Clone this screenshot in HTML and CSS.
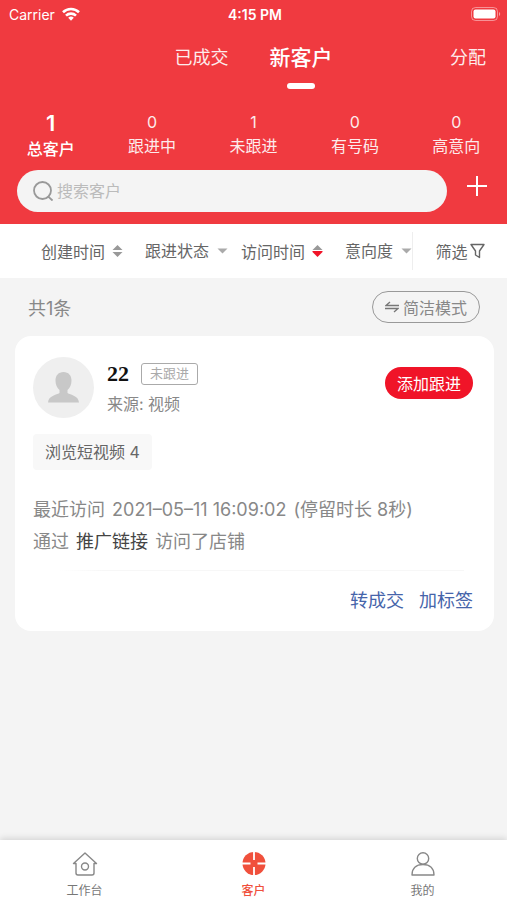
FILE: index.html
```html
<!DOCTYPE html>
<html lang="zh-CN">
<head>
    <meta charset="UTF-8">
    <meta name="viewport" content="width=device-width, initial-scale=1.0">
    <title>客户</title>
    <link rel="stylesheet" href="styles.css">
</head>
<body>
    <header class="header">
        <div class="status-bar">
            <div class="carrier">
                <span>Carrier</span>
                <svg width="18" height="14" viewBox="0 0 18 14" fill="none" stroke="#fff" stroke-width="2.6">
                    <path d="M1 5.2a11.5 11.5 0 0 1 16 0"/>
                    <path d="M4 8.6a7.2 7.2 0 0 1 10 0"/>
                    <path d="M9 13.8 6.2 10.8a4 4 0 0 1 5.6 0z" fill="#fff" stroke="none"/>
                </svg>
            </div>
            <span class="clock">4:15 PM</span>
            <svg class="battery" width="30" height="14" viewBox="0 0 30 14">
                <rect x="0.5" y="0.5" width="26" height="13" rx="4" fill="none" stroke="#fff" stroke-opacity="0.45"/>
                <rect x="2.5" y="2.5" width="22" height="9" rx="2" fill="#fff"/>
                <path d="M28 5c1.6.6 1.6 3.4 0 4z" fill="#fff" fill-opacity="0.5"/>
            </svg>
        </div>

        <nav class="top-nav">
            <div class="top-tabs">
                <a href="#" class="top-tab">已成交</a>
                <a href="#" class="top-tab active">新客户</a>
            </div>
            <a href="#" class="assign">分配</a>
        </nav>

        <div class="stats">
            <button class="stat active"><span class="stat-num">1</span><span>总客户</span></button>
            <button class="stat"><span class="stat-num">0</span><span>跟进中</span></button>
            <button class="stat"><span class="stat-num">1</span><span>未跟进</span></button>
            <button class="stat"><span class="stat-num">0</span><span>有号码</span></button>
            <button class="stat"><span class="stat-num">0</span><span>高意向</span></button>
        </div>

        <div class="search-row">
            <label class="search-box">
                <svg width="20" height="20" viewBox="0 0 20 20" fill="none" stroke="#999" stroke-width="1.8" stroke-linecap="round">
                    <circle cx="9.5" cy="9.5" r="8.5"/>
                    <path d="M15.500 15.800 19 19"/>
                </svg>
                <input type="text" class="search-input" placeholder="搜索客户" aria-label="搜索客户">
            </label>
            <button class="add-btn" aria-label="添加客户">
                <svg width="20" height="20" viewBox="0 0 20 20" stroke="#fff" stroke-width="2">
                    <path d="M10 0v20M0 10h20"/>
                </svg>
            </button>
        </div>
    </header>

    <div class="filters">
        <button class="filter">
            创建时间
            <svg width="11" height="12" viewBox="0 0 11 12" fill="#999"><path d="M5.5 0 10.5 5H.5zM5.5 12 .5 7h10z"/></svg>
        </button>
        <label class="filter filter-menu">
            <select aria-label="跟进状态"><option>跟进状态</option></select>
            <svg width="11" height="12" viewBox="0 0 11 12" fill="#aaa"><path d="M.5 3.5h10l-5 5z"/></svg>
        </label>
        <button class="filter">
            访问时间
            <svg width="11" height="12" viewBox="0 0 11 12"><path d="M5.5 0 10.5 5H.5z" fill="#999"/><path d="M5.5 12 .5 7V6h10v1z" fill="#f01428"/></svg>
        </button>
        <label class="filter filter-menu">
            <select aria-label="意向度"><option>意向度</option></select>
            <svg width="11" height="12" viewBox="0 0 11 12" fill="#aaa"><path d="M.5 3.5h10l-5 5z"/></svg>
        </label>
        <button class="filter filter-more">
            筛选
            <svg width="15" height="16" viewBox="0 0 15 16" fill="none" stroke="#666" stroke-width="1.4" stroke-linejoin="round">
                <path d="M1 1.5h13L9.5 8v6.500L5.500 12V8z"/>
            </svg>
        </button>
    </div>

    <main class="content">
        <div class="list-head">
            <span class="total">共1条</span>
            <button class="mode-btn">
                <svg width="14" height="12" viewBox="0 0 14 12" fill="none" stroke="#777" stroke-width="1.3">
                    <path d="M14 4.500H1L5 1M0 7.500h13L9 11"/>
                </svg>
                简洁模式
            </button>
        </div>

        <article class="card">
            <div class="customer">
                <svg class="avatar" width="61" height="61" viewBox="0 0 61 61">
                    <circle cx="30.5" cy="30.5" r="30.5" fill="#efefef"/>
                    <path d="M30.5 15c-5 0-8 3.500-8 8.500 0 4 1.500 7.500 4 9.500v3c-3 2-11 2.500-11.500 9.500h31c-.5-7-8.500-7.500-11.500-9.500v-3c2.500-2 4-5.500 4-9.500 0-5-3-8.500-8-8.500z" fill="#c8c8c8"/>
                </svg>
                <div class="info">
                    <div class="name-row">
                        <span class="name">22</span>
                        <span class="badge">未跟进</span>
                    </div>
                    <div class="source">来源: 视频</div>
                </div>
                <button class="follow-btn">添加跟进</button>
            </div>
            <span class="tag">浏览短视频 4</span>
            <div class="visit">
                <p>最近访问 <span class="time">2021–05–11 16:09:02</span> (停留时长 8秒)</p>
                <p>通过 <span class="channel">推广链接</span> 访问了店铺</p>
            </div>
            <div class="actions">
                <a href="#">转成交</a>
                <a href="#">加标签</a>
            </div>
        </article>
    </main>

    <nav class="tab-bar">
        <a href="#" class="tab">
            <svg width="26" height="26" viewBox="0 0 26 26" fill="none" stroke="#888" stroke-width="1.4" stroke-linejoin="round" stroke-linecap="round">
                <path d="M4 12.500H1.500L13 2l11.500 10.500H22V22a2 2 0 0 1-2 2H6a2 2 0 0 1-2-2z"/>
                <circle cx="13" cy="15.500" r="3.500"/>
            </svg>
            工作台
        </a>
        <a href="#" class="tab active">
            <svg width="26" height="26" viewBox="0 0 26 26">
                <circle cx="13" cy="12.500" r="11.500" fill="#f0503c"/>
                <path d="M13 0v9M13 16v9M1 12.500h8.500M16.500 12.500H25" stroke="#fff" stroke-width="1.8"/>
            </svg>
            客户
        </a>
        <a href="#" class="tab">
            <svg width="26" height="26" viewBox="0 0 26 26" fill="none" stroke="#888" stroke-width="1.4" stroke-linejoin="round">
                <circle cx="13" cy="7.500" r="5.700"/>
                <path d="M2 24c0-6.500 4-10.500 11-10.500S24 17.500 24 24z"/>
            </svg>
            我的
        </a>
    </nav>
</body>
</html>
```
FILE: styles.css
```css
* {
    box-sizing: border-box;
}

body {
    margin: 0;
    min-height: 100vh;
    display: flex;
    flex-direction: column;
    background: #f4f4f4;
    color: #666;
    font-family: Inter, "Noto Sans CJK SC", sans-serif;
    font-size: 16px;
}

a {
    color: inherit;
    text-decoration: none;
}

button, select, input {
    margin: 0;
    padding: 0;
    border: none;
    background: none;
    color: inherit;
    font: inherit;
}

button {
    cursor: pointer;
}

svg {
    display: block;
    flex-shrink: 0;
}

p {
    margin: 0;
}

/* header */
.header {
    background: #f03a40;
    color: #fff;
    padding-bottom: 12px;
}

.status-bar {
    display: grid;
    grid-template-columns: 1fr auto 1fr;
    align-items: center;
    height: 28px;
    padding: 0 6px 0 9px;
    font-size: 14px;
}

.carrier {
    display: flex;
    align-items: center;
    gap: 7px;
}

.clock {
    font-size: 14px;
    font-weight: 600;
}

.battery {
    justify-self: end;
}

.top-nav {
    display: grid;
    grid-template-columns: 1fr auto 1fr;
    align-items: center;
    height: 56px;
    padding: 0 21px;
    font-size: 18px;
}

.top-tabs {
    grid-column: 2;
    display: flex;
    align-items: center;
    gap: 41px;
}

.top-tab {
    opacity: 0.9;
}

.top-tab.active {
    position: relative;
    font-size: 21px;
    font-weight: 500;
    opacity: 1;
}

.top-tab.active::after {
    content: "";
    position: absolute;
    left: 50%;
    bottom: -18px;
    width: 28px;
    height: 6px;
    margin-left: -14px;
    border-radius: 3px;
    background: #fff;
}

.assign {
    justify-self: end;
    opacity: 0.9;
}

.stats {
    display: grid;
    grid-template-columns: repeat(5, 1fr);
    height: 86px;
    padding-top: 26px;
}

.stat {
    display: flex;
    flex-direction: column;
    align-items: center;
    line-height: 24px;
    opacity: 0.9;
}

.stat.active {
    font-weight: 500;
    line-height: 26px;
    opacity: 1;
}

.stat.active .stat-num {
    font-size: 22px;
    font-weight: 600;
}

.search-row {
    display: flex;
    align-items: center;
    gap: 20px;
    padding: 0 20px 0 17px;
}

.search-box {
    flex: 1;
    display: flex;
    align-items: center;
    gap: 4px;
    height: 42px;
    padding: 0 16px;
    border-radius: 21px;
    background: #f4f4f4;
}

.search-input {
    flex: 1;
    min-width: 0;
    color: #555;
    outline: none;
}

.search-input::placeholder {
    color: #bbb;
}

.add-btn {
    padding-bottom: 10px;
}

/* filters */
.filters {
    display: flex;
    align-items: center;
    gap: 13px;
    height: 54px;
    padding-left: 41px;
    background: #fff;
}

.filter {
    display: flex;
    align-items: center;
    gap: 7px;
    white-space: nowrap;
}

.filter-menu {
    padding-left: 9px;
}

.filter-menu select {
    appearance: none;
}

.filter-more {
    flex: 1;
    justify-content: center;
    gap: 2px;
    height: 38px;
    margin-left: -13px;
    border-left: 1px solid #eee;
}

/* customer list */
.content {
    flex: 1;
    padding: 0 13px 20px 15px;
}

.list-head {
    display: flex;
    align-items: center;
    justify-content: space-between;
    height: 58px;
    padding: 0 14px 0 13px;
    color: #888;
}

.total {
    font-size: 18px;
}

.mode-btn {
    display: flex;
    align-items: center;
    gap: 4px;
    height: 32px;
    padding: 0 12px;
    border: 1px solid #999;
    border-radius: 16px;
}

.card {
    padding: 21px 21px 15px 18px;
    border-radius: 16px;
    background: #fff;
}

.customer {
    display: flex;
    align-items: center;
}

.info {
    flex: 1;
    margin-left: 13px;
}

.name-row {
    display: flex;
    align-items: center;
    gap: 12px;
    height: 32px;
}

.name {
    color: #111;
    font-family: "Liberation Serif", serif;
    font-size: 22px;
    font-weight: bold;
}

.badge {
    height: 22px;
    padding: 0 8px;
    border: 1px solid #aaa;
    border-radius: 3px;
    color: #aaa;
    font-size: 13px;
    line-height: 19px;
}

.source {
    color: #888;
    line-height: 28px;
}

.follow-btn {
    height: 32px;
    margin-bottom: 9px;
    padding: 0 12px;
    border-radius: 16px;
    background: #f01428;
    color: #fff;
}

.tag {
    display: inline-block;
    margin-top: 16px;
    padding: 0 12px;
    border-radius: 4px;
    background: #f8f8f8;
    line-height: 36px;
}

.visit {
    margin-top: 24px;
    color: #888;
    font-size: 18px;
    line-height: 32px;
}

.time,
.channel {
    margin: 0 2px;
}

.channel {
    color: #444;
}

.actions {
    display: flex;
    justify-content: flex-end;
    gap: 15px;
    margin-top: 12px;
    padding-top: 16px;
    color: #4664aa;
    font-size: 18px;
    line-height: 30px;
    background: linear-gradient(90deg, transparent 6%, #f7f7f7 16%, #f7f7f7 98%, transparent 98%) no-repeat top / 100% 1px;
}

/* bottom tabs */
.tab-bar {
    display: grid;
    grid-template-columns: repeat(3, 1fr);
    height: 60px;
    padding-top: 11px;
    background: #fff;
    box-shadow: 0 -2px 6px rgba(0, 0, 0, 0.12);
    color: #777;
    font-size: 12px;
}

.tab {
    display: flex;
    flex-direction: column;
    align-items: center;
    gap: 5px;
    line-height: 18px;
}

.tab.active {
    color: #f0503c;
    font-weight: 500;
}
```
